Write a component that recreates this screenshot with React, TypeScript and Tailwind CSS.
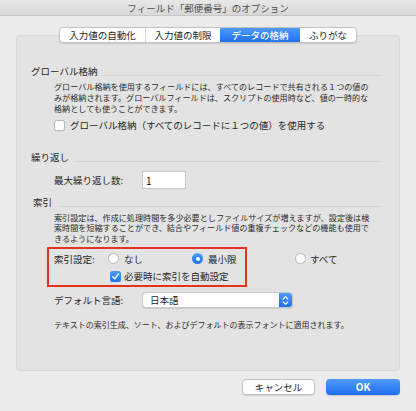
import React from "react";

const Heading = ({ text, gap }: { text: string; gap: string }) => (
  <div className="flex items-end h-[12px] pl-[14px] pr-[18px]">
    <span className="text-[9.5px] leading-[12px] text-[#262626] whitespace-nowrap">{text}</span>
    <div className={`flex-1 h-px bg-[#d3d3d3] mb-[1.5px] ${gap}`} />
  </div>
);

const Checkbox = ({ checked }: { checked?: boolean }) =>
  checked ? (
    <div className="w-[11px] h-[11px] rounded-[2.5px] bg-gradient-to-b from-[#4f9bf9] to-[#1c6ff1] flex items-center justify-center shrink-0">
      <svg width="9" height="9" viewBox="0 0 10 10">
        <path d="M2 5.3 L4.2 7.6 L8.3 2.2" fill="none" stroke="#fff" strokeWidth="1.6" strokeLinecap="round" strokeLinejoin="round" />
      </svg>
    </div>
  ) : (
    <div className="w-[11px] h-[11px] rounded-[2.5px] bg-white border border-[#b4b4b4] shadow-[0_0.5px_0.5px_rgba(0,0,0,0.08)] shrink-0" />
  );

const Radio = ({ checked }: { checked?: boolean }) =>
  checked ? (
    <div className="w-[11px] h-[11px] rounded-full bg-gradient-to-b from-[#4f9bf9] to-[#1c6ff1] flex items-center justify-center shrink-0">
      <div className="w-[4px] h-[4px] rounded-full bg-white" />
    </div>
  ) : (
    <div className="w-[11px] h-[11px] rounded-full bg-white border border-[#b4b4b4] shrink-0" />
  );

export default function App() {
  return (
    <div className="w-[416px] h-[411px] bg-[#ececec] overflow-hidden flex flex-col font-['Noto_Sans_CJK_JP',sans-serif] text-[#262626]">
      {/* Title bar */}
      <div className="h-[16px] shrink-0 bg-gradient-to-b from-[#e8e8e8] to-[#d8d8d8] border-b border-[#c6c6c6] flex items-center justify-center">
        <span className="text-[9.5px] leading-[12px] text-[#4d4d4d]">フィールド「郵便番号」のオプション</span>
      </div>

      <div className="px-[16px] flex flex-col">
        {/* Tabs */}
        <div className="mt-[11px] h-[16px] flex justify-center relative z-10">
          <div className="flex h-[16px] bg-white border border-[#c3c3c3] rounded-[4px] shadow-[0_0.5px_1px_rgba(0,0,0,0.12)] overflow-hidden text-[9.5px] leading-[14px]">
            <div className="w-[86px] flex items-center justify-center border-r border-[#d6d6d6]">入力値の自動化</div>
            <div className="w-[74px] flex items-center justify-center">入力値の制限</div>
            <div className="w-[80px] flex items-center justify-center bg-gradient-to-b from-[#4e9bf9] to-[#1f6ef1] text-white font-medium">データの格納</div>
            <div className="flex-1 w-[56px] flex items-center justify-center">ふりがな</div>
          </div>
        </div>

        {/* Group box */}
        <div className="-mt-[8px] h-[336px] relative bg-[#e3e3e3] border border-[#d9d9d9] rounded-[4px] flex flex-col">
          <div className="mt-[29px]">
            <Heading text="グローバル格納" gap="ml-[5px]" />
          </div>
          <div className="mt-[4px] pl-[37px] pr-[20px] text-[8.1px] leading-[11px] text-[#2a2a2a]">
            <div>グローバル格納を使用するフィールドには、すべてのレコードで共有される１つの値の</div>
            <div>みが格納されます。グローバルフィールドは、スクリプトの使用時など、値の一時的な</div>
            <div>格納としても使うことができます。</div>
          </div>
          <div className="mt-[5px] h-[12px] pl-[37px] flex items-center gap-[5px]">
            <Checkbox />
            <span className="text-[9.5px] leading-[12px] whitespace-nowrap">グローバル格納（すべてのレコードに１つの値）を使用する</span>
          </div>

          <div className="mt-[20px]">
            <Heading text="繰り返し" gap="ml-[6px]" />
          </div>
          <div className="mt-[8px] h-[18px] pl-[37px] flex items-center">
            <span className="w-[88px] text-[9.5px] leading-[12px]">最大繰り返し数:</span>
            <div className="w-[44px] h-[18px] bg-white border border-[#c6c6c6] flex items-center pl-[3px] text-[10px] text-[#111]">1</div>
          </div>

          <div className="mt-[7px] pl-[2px]">
            <Heading text="索引" gap="ml-[8px]" />
          </div>
          <div className="mt-[4.5px] pl-[37px] pr-[20px] text-[8.1px] leading-[10.75px] text-[#2a2a2a]">
            <div>索引設定は、作成に処理時間を多少必要としファイルサイズが増えますが、設定後は検</div>
            <div>索時間を短縮することができ、結合やフィールド値の重複チェックなどの機能も使用で</div>
            <div>きるようになります。</div>
          </div>

          <div className="mt-[7.75px] h-[12px] pl-[37px] flex items-center text-[9.5px] leading-[12px]">
            <span className="w-[54px]">索引設定:</span>
            <div className="w-[84px] flex items-center gap-[5px]">
              <Radio />
              <span>なし</span>
            </div>
            <div className="w-[103px] flex items-center gap-[5px]">
              <Radio checked />
              <span>最小限</span>
            </div>
            <div className="flex items-center gap-[4px]">
              <Radio />
              <span>すべて</span>
            </div>
          </div>
          <div className="mt-[5.5px] h-[12px] pl-[93px] flex items-center gap-[3px] text-[9.5px] leading-[12px]">
            <Checkbox checked />
            <span>必要時に索引を自動設定</span>
          </div>

          <div className="mt-[10px] h-[16px] pl-[37px] flex items-center">
            <span className="w-[88px] text-[9.5px] leading-[12px]">デフォルト言語:</span>
            <div className="w-[151px] h-[16px] bg-white border border-[#c8c8c8] rounded-[4px] shadow-[0_0.5px_1px_rgba(0,0,0,0.1)] flex items-center overflow-hidden">
              <span className="flex-1 pl-[7px] text-[9.5px] leading-[12px]">日本語</span>
              <div className="w-[13px] h-full bg-gradient-to-b from-[#4e9bf9] to-[#1f6ef1] flex items-center justify-center">
                <svg width="7" height="11" viewBox="0 0 7 11">
                  <path d="M1.2 4 L3.5 1.7 L5.8 4" fill="none" stroke="#fff" strokeWidth="1.1" strokeLinecap="round" strokeLinejoin="round" />
                  <path d="M1.2 7 L3.5 9.3 L5.8 7" fill="none" stroke="#fff" strokeWidth="1.1" strokeLinecap="round" strokeLinejoin="round" />
                </svg>
              </div>
            </div>
          </div>
          <div className="mt-[10.5px] pl-[37px] text-[8px] leading-[11px] text-[#2a2a2a] whitespace-nowrap">
            テキストの索引生成、ソート、およびデフォルトの表示フォントに適用されます。
          </div>

          {/* Red annotation box */}
          <div className="absolute left-[30px] top-[211px] w-[200px] h-[40px] border-2 border-[#e5321d] pointer-events-none" />
        </div>

        {/* Buttons */}
        <div className="mt-[8px] h-[16px] flex justify-end gap-[11px]">
          <div className="w-[73px] h-[16px] bg-white border border-[#c3c3c3] rounded-[4px] shadow-[0_0.5px_1px_rgba(0,0,0,0.12)] flex items-center justify-center text-[9.5px] leading-[12px]">
            キャンセル
          </div>
          <div className="w-[74px] h-[16px] rounded-[4px] bg-gradient-to-b from-[#4e9bf9] to-[#1f6ef1] shadow-[0_0.5px_1px_rgba(0,0,0,0.15)] flex items-center justify-center text-[10px] leading-[12px] text-white font-semibold">
            OK
          </div>
        </div>
      </div>
    </div>
  );
}
